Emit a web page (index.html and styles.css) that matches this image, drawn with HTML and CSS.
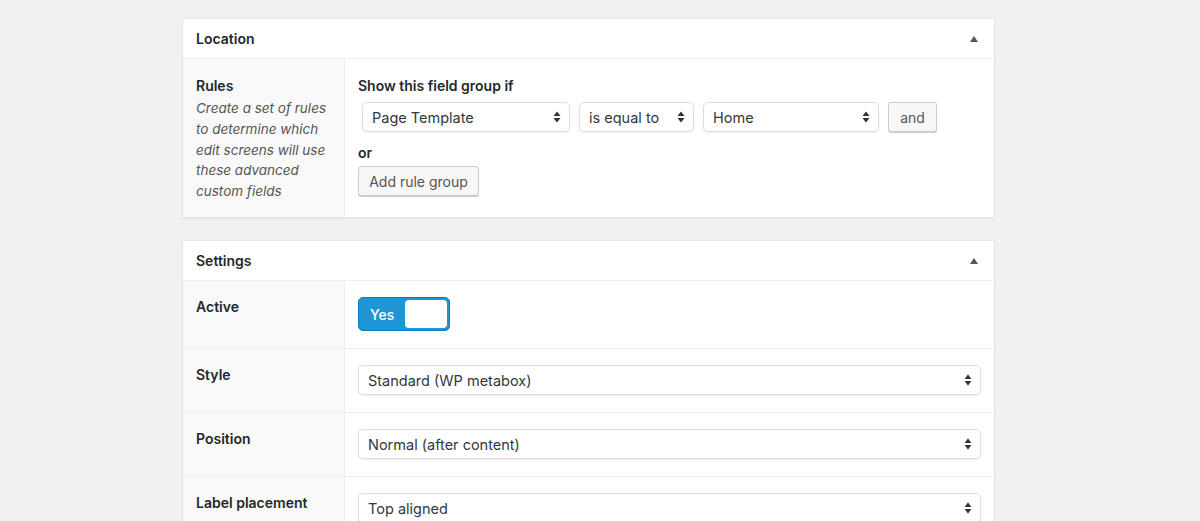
FILE: index.html
```html
<!DOCTYPE html>
<html lang="en">
<head>
<meta charset="utf-8">
<title>Field group</title>
<link rel="stylesheet" href="styles.css">
</head>
<body>
<div class="wrap">
  <div class="postbox">
    <div class="postbox-header">
      <h2>Location</h2>
      <span class="handle-arrow"></span>
    </div>
    <div class="field-row rules-row">
      <div class="field-label">
        <label>Rules</label>
        <p class="desc">Create a set of rules to determine which edit screens will use these advanced custom fields</p>
      </div>
      <div class="field-input">
        <h4 class="group-title">Show this field group if</h4>
        <div class="rule-line">
          <div class="select sel-param"><span>Page Template</span><svg class="arrows" width="8" height="12" viewBox="0 0 8 12"><path d="M4 0.5 L7.5 5 L0.5 5 Z M4 11.5 L7.5 7 L0.5 7 Z" fill="#333"/></svg></div>
          <div class="select sel-op"><span>is equal to</span><svg class="arrows" width="8" height="12" viewBox="0 0 8 12"><path d="M4 0.5 L7.5 5 L0.5 5 Z M4 11.5 L7.5 7 L0.5 7 Z" fill="#333"/></svg></div>
          <div class="select sel-val"><span>Home</span><svg class="arrows" width="8" height="12" viewBox="0 0 8 12"><path d="M4 0.5 L7.5 5 L0.5 5 Z M4 11.5 L7.5 7 L0.5 7 Z" fill="#333"/></svg></div>
          <button class="button btn-and">and</button>
        </div>
        <h4 class="or-title">or</h4>
        <button class="button btn-add">Add rule group</button>
      </div>
    </div>
  </div>

  <div class="postbox settings">
    <div class="postbox-header">
      <h2>Settings</h2>
      <span class="handle-arrow"></span>
    </div>
    <div class="field-row row-active">
      <div class="field-label"><label>Active</label></div>
      <div class="field-input">
        <div class="switch"><span class="switch-on">Yes</span><span class="switch-slider"></span></div>
      </div>
    </div>
    <div class="field-row">
      <div class="field-label"><label>Style</label></div>
      <div class="field-input">
        <div class="select full"><span>Standard (WP metabox)</span><svg class="arrows" width="8" height="12" viewBox="0 0 8 12"><path d="M4 0.5 L7.5 5 L0.5 5 Z M4 11.5 L7.5 7 L0.5 7 Z" fill="#333"/></svg></div>
      </div>
    </div>
    <div class="field-row">
      <div class="field-label"><label>Position</label></div>
      <div class="field-input">
        <div class="select full"><span>Normal (after content)</span><svg class="arrows" width="8" height="12" viewBox="0 0 8 12"><path d="M4 0.5 L7.5 5 L0.5 5 Z M4 11.5 L7.5 7 L0.5 7 Z" fill="#333"/></svg></div>
      </div>
    </div>
    <div class="field-row">
      <div class="field-label"><label>Label placement</label></div>
      <div class="field-input">
        <div class="select full"><span>Top aligned</span><svg class="arrows" width="8" height="12" viewBox="0 0 8 12"><path d="M4 0.5 L7.5 5 L0.5 5 Z M4 11.5 L7.5 7 L0.5 7 Z" fill="#333"/></svg></div>
      </div>
    </div>
  </div>
</div>
</body>
</html>
```

FILE: styles.css
```css
* { box-sizing: border-box; }

html, body {
  margin: 0;
  padding: 0;
  background: #f1f1f1;
  font-family: Inter, "Open Sans", "Liberation Sans", sans-serif;
  font-size: 14px;
  color: #23282d;
  overflow: hidden;
}

.wrap {
  width: 813px;
  margin-left: 182px;
  padding-top: 18px;
}

.postbox {
  background: #fff;
  border: 1px solid #e5e5e5;
  box-shadow: 0 1px 1px rgba(0,0,0,0.04);
}

.postbox.settings {
  margin-top: 22px;
}

.postbox-header {
  height: 40px;
  display: flex;
  align-items: center;
  justify-content: space-between;
  padding: 0 14px 0 13px;
  border-bottom: 1px solid #eee;
}

.postbox-header h2 {
  margin: 0;
  font-size: 14px;
  font-weight: 600;
  color: #23282d;
}

.handle-arrow {
  width: 0;
  height: 0;
  border-left: 4px solid transparent;
  border-right: 4px solid transparent;
  border-bottom: 6px solid #555;
  margin-right: 2px;
}

.field-row {
  display: flex;
  border-top: 1px solid #eee;
}

.postbox-header + .field-row {
  border-top: none;
}

.field-label {
  width: 162px;
  flex: none;
  background: #f9f9f9;
  border-right: 1px solid #eee;
  padding: 16px 12px 12px 13px;
}

.rules-row .field-label {
  padding-top: 17px;
}

.field-label label {
  display: block;
  font-weight: 600;
  font-size: 14px;
  line-height: 19px;
  color: #23282d;
}

.desc {
  margin: 3px 0 0;
  font-style: italic;
  font-size: 13.5px;
  line-height: 20.8px;
  color: #555;
}

.field-input {
  flex: 1;
  padding: 16px 13px 17px 13px;
}

.rules-row .field-input {
  padding-top: 17px;
  padding-bottom: 21px;
}

.group-title, .or-title {
  margin: 0;
  font-size: 14px;
  font-weight: 600;
  line-height: 19px;
  color: #23282d;
}

.rule-line {
  display: flex;
  align-items: center;
  gap: 9px;
  margin: 7px 0 0 4px;
}

.or-title {
  margin-top: 11px;
}

.select {
  height: 30px;
  background: #fff;
  border: 1px solid #ddd;
  border-radius: 5px;
  box-shadow: 0 1px 2px rgba(0,0,0,0.07);
  display: flex;
  align-items: center;
  justify-content: space-between;
  padding: 0 8px 0 9px;
  font-size: 14.5px;
  color: #32373c;
}

.sel-param { width: 208px; }
.sel-op { width: 115px; }
.sel-val { width: 176px; }
.select.full { width: 623px; }

.arrows { flex: none; }

.button {
  height: 30px;
  background: #f7f7f7;
  border: 1px solid #ccc;
  border-radius: 3px;
  box-shadow: 0 1px 0 #ccc;
  font-family: inherit;
  font-size: 14px;
  color: #555;
  padding: 0 10px;
  cursor: pointer;
}

.btn-and {
  width: 49px;
  padding: 0;
}

.btn-add {
  margin-top: 4px;
  width: 121px;
  padding: 0;
}

.row-active .field-input {
  padding-top: 16px;
  padding-bottom: 17px;
}

.switch {
  width: 92px;
  height: 34px;
  background: #2095d6;
  border: 1px solid #0b7cba;
  border-radius: 5px;
  display: flex;
  align-items: center;
  justify-content: space-between;
  padding: 0 2px 0 11px;
}

.switch-on {
  color: #fff;
  font-size: 14px;
  font-weight: 500;
}

.switch-slider {
  width: 42px;
  height: 28px;
  background: #fff;
  border-radius: 4px;
}
```
